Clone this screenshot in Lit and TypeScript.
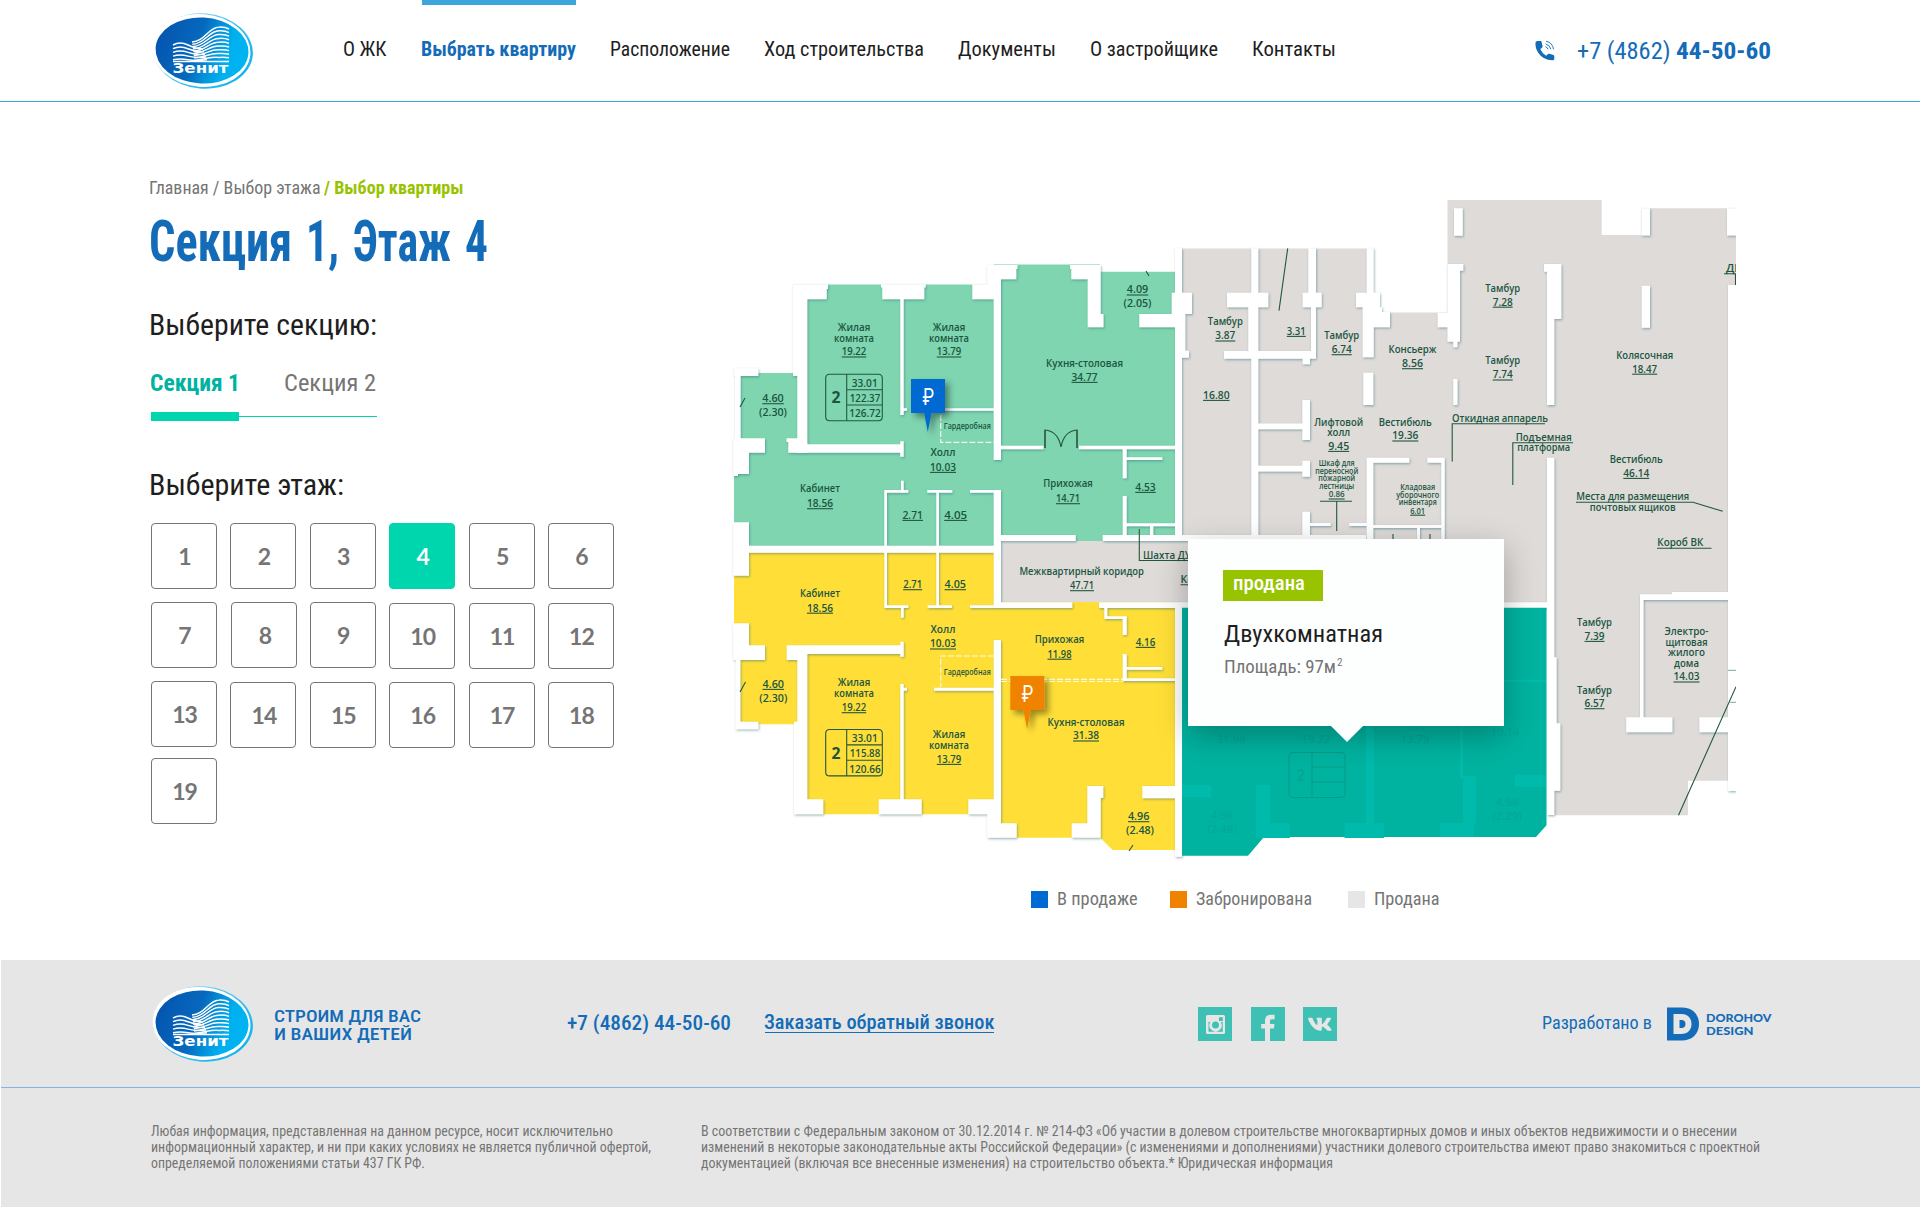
import { LitElement, html, svg, css } from "lit";
import { customElement, property, state } from "lit/decorators.js";
import { classMap } from "lit/directives/class-map.js";

/** One line of condensed text, set to an exact measure. */
const line = (text: string, width: number, size: number, cls = "") => html`
  <svg class="line" width=${width} height=${size + 6} role="text">
    <text class=${cls} x=${size > 14 ? -1 : 0} y=${size} font-size=${size} textLength=${size > 14 ? width + 1 : width} lengthAdjust="spacingAndGlyphs">${text}</text>
  </svg>`;

const lineStyles = css`
  .line { display: block; overflow: visible; flex: none; fill: currentColor;
    font-family: "Roboto Condensed", Roboto, "Liberation Sans", sans-serif; white-space: pre; }
  .medium { font-weight: 500; }
  .bold { font-weight: 700; }
`;

@customElement("zenit-logo")
class ZenitLogo extends LitElement {
  static styles = css`
    :host { display: block; width: 102px; height: 78px; }
    svg { display: block; }
    .name { font: 700 13.5px "DejaVu Sans", Roboto, sans-serif; fill: #fff; }
    .wave { fill: none; stroke: #fff; stroke-width: 1.5; }
  `;
  render() {
    const floors = Array.from({ length: 9 }, (_, i) => i);
    return html`
      <svg width="102" height="78" viewBox="0 0 102 78">
        <defs>
          <linearGradient id="g" x1="0" y1=".3" x2="1" y2=".5">
            <stop offset="0" stop-color="#0554ae" />
            <stop offset=".45" stop-color="#0669bd" />
            <stop offset=".62" stop-color="#048fd8" />
            <stop offset=".8" stop-color="#00b0ef" />
            <stop offset="1" stop-color="#00b4f2" />
          </linearGradient>
          <linearGradient id="r" x1="0" y1="0" x2="1" y2=".6">
            <stop offset="0" stop-color="#c9ecfb" />
            <stop offset=".5" stop-color="#4fc3f0" />
            <stop offset="1" stop-color="#18b4ee" />
          </linearGradient>
        </defs>
        <ellipse cx="51" cy="39" rx="50" ry="37.6" transform="rotate(5 51 39)" fill="url(#r)" />
        <ellipse cx="49.5" cy="38.6" rx="49" ry="36.4" transform="rotate(5 51 39)" fill="#fff" />
        <ellipse cx="50" cy="38.6" rx="46.5" ry="33" transform="rotate(3 51 39)" fill="url(#g)" />
        ${floors.map((i) => svg`<path class="wave" d=${`M${40 + i * 0.3} ${30 + i * 2.3} C${52 + i * 0.6} ${30 + i * 2.1} ${57} ${15 + i * 3.7} ${67} ${15 + i * 3.8} Q73 ${14.6 + i * 3.8} 77 ${17 + i * 3.6}`} />`)}
        ${[0, 1, 2, 3, 4].map((i) => svg`<path class="wave" d=${`M21 ${33 + i * 3.7} Q28 ${29 + i * 4.3} 36 ${33 + i * 3.7} T${51 + i} ${37 + i * 2.7}`} />`)}
        <path class="wave" d="M21 49.5H77" />
        <text class="name" x="20.5" y="61" textLength="56" lengthAdjust="spacingAndGlyphs">Зенит</text>
      </svg>`;
  }
}

@customElement("site-header")
class SiteHeader extends LitElement {
  static styles = [lineStyles, css`
    :host { display: flex; box-sizing: border-box; height: 102px; padding: 0 0 0 152px;
      border-bottom: 1px solid #3ba5dc; color: #1e1e1e; background: #fff; }
    zenit-logo { margin-top: 12px; }
    nav { display: flex; gap: 35px; margin-left: 90px; }
    .link { padding-top: 30px; border-top: 5px solid transparent; }
    .active { color: #146cb8; border-top-color: #3ba5dc; }
    .phone { display: flex; margin: 35px 0 0 198px; color: #146cb8; }
    .phone .icon { display: block; margin: 5px 22px 0 0; }
    .num { margin-left: 7px; }
  `];
  links: [string, number][] = [["О ЖК", 42.5], ["Выбрать квартиру", 154], ["Расположение", 119],
    ["Ход строительства", 159], ["Документы", 97], ["О застройщике", 127], ["Контакты", 83]];
  render() {
    return html`
      <zenit-logo></zenit-logo>
      <nav>
        ${this.links.map(([t, w], i) => html`<div class=${classMap({ link: true, active: i === 1 })}>${line(t, w, 21, i === 1 ? "bold" : "")}</div>`)}
      </nav>
      <div class="phone">
        <svg class="icon" width="22" height="22" viewBox="0 0 22 22" fill="#146cb8">
          <path d="M1.500 2.600Q1.700 1.100 3.600 1L6.600.9Q7.400 1 7.600 2L8.600 6.300Q8.700 7.200 8 7.700L6.300 9Q8 13.600 12.200 15.700L14 14.100Q14.700 13.600 15.500 13.800L19.400 14.900Q20.300 15.200 20.300 16.200V19Q20.200 20.300 18.700 20.300Q9.500 20.600 4.200 12.800Q1 8 1.500 2.600Z" />
          <path d="M12 1.200Q18.400 2.400 19.600 9.400M11.700 4Q16 5 16.800 9.200M11.500 6.700Q13.600 7.300 14 9.300" fill="none" stroke="#146cb8" stroke-width=".9" />
        </svg>
        ${line("+7 (4862)", 92.5, 24)}
        <div class="num">${line("44-50-60", 94, 24, "bold")}</div>
      </div>`;
  }
}

@customElement("floor-picker")
class FloorPicker extends LitElement {
  @property({ type: Number }) floor = 4;
  static styles = [lineStyles, css`
    :host { display: block; flex: none; box-sizing: border-box; width: 724px; padding: 74px 0 0 149.5px; color: #1e1e1e; }
    .crumbs { display: flex; gap: 4.5px; color: #757575; }
    .here { color: #98c300; }
    .title { display: flex; gap: 15px; margin-top: 3px; color: #146cb8; }
    .head { margin-top: 37.5px; }
    .tabs { display: flex; gap: 45px; margin-top: 26px; padding-left: 1px; color: #757575; }
    .on { color: #00b3a0; }
    .track { display: flex; align-items: center; width: 226px; height: 9px; margin: 15.5px 0 0 1.5px; }
    .fill { width: 88px; height: 9px; background: #00d6ae; }
    .rest { flex: 1; height: 1px; background: #00d6ae; }
    .second { margin-top: 44px; }
    .grid { display: grid; grid-template-columns: repeat(6, 79.4px); grid-template-rows: 79px 78.5px 77.5px 66px;
      margin: 22px 0 0 1.5px; }
    .cell { box-sizing: border-box; width: 66px; height: 66px; border: 1px solid #757575; border-radius: 4px;
      display: flex; align-items: center; justify-content: center; color: #757575;
      font: 700 23px/1 Lato, "Open Sans", sans-serif; letter-spacing: -1px; padding: 1px 0 0 1px; background: #fff; }
    .low { margin-top: 1px; }
    .right { margin-left: 1px; }
    .picked { background: #00d6ae; border-color: #00d6ae; color: #fff; }
  `];
  render() {
    const floors = Array.from({ length: 19 }, (_, i) => i + 1);
    return html`
      <div class="crumbs">${line("Главная / Выбор этажа", 170.5, 18)}<div class="here">${line("/ Выбор квартиры", 138.5, 18, "bold")}</div></div>
      <div class="title">
        ${line("Секция", 142, 58, "bold")}${line("1,", 32, 58, "bold")}${line("Этаж", 97, 58, "bold")}${line("4", 22, 58, "bold")}
      </div>
      <div class="head">${line("Выберите секцию:", 227, 30)}</div>
      <div class="tabs"><div class="on">${line("Секция 1", 89, 24, "bold")}</div>${line("Секция 2", 91, 24)}</div>
      <div class="track"><div class="fill"></div><div class="rest"></div></div>
      <div class="head second">${line("Выберите этаж:", 194, 30)}</div>
      <div class="grid">
        ${floors.map((n) => html`<div class=${classMap({
          cell: true, picked: n === this.floor,
          low: (n > 9 && n < 13) || (n > 13 && n < 19), right: n === 8,
        })}>${n}</div>`)}
      </div>`;
  }
}

type Label = [text: string, cx: number, base: number, width: number, kind?: string];

const LABELS: Label[] = [
  ["Жилая", 854, 331, 32.5], ["комната", 854, 341.7, 40], ["19.22", 854, 355.3, 24.5, "u"],
  ["Жилая", 949, 331, 32.5], ["комната", 949, 341.7, 40], ["13.79", 949, 355.3, 24.5, "u"],
  ["33.01", 864.7, 387, 26], ["122.37", 865, 401.7, 30.5], ["126.72", 865, 417.3, 31.5], ["2", 836, 403.3, 9, "n"],
  ["4.60", 773, 402, 21.5, "u"], ["(2.30)", 773, 416, 28], ["Гардеробная", 967.3, 428.7, 47, "s"],
  ["Холл", 943, 456.3, 25], ["10.03", 943, 470.7, 26, "u"], ["Кабинет", 820, 492.3, 40], ["18.56", 820, 507, 26, "u"],
  ["2.71", 912.7, 518.7, 20.5, "u"], ["4.05", 955.7, 518.7, 23, "u"],
  ["4.09", 1137.5, 293.3, 21.5, "u"], ["(2.05)", 1137.5, 307.3, 28], ["Кухня-столовая", 1084.5, 366.7, 77],
  ["34.77", 1084.5, 380.7, 26, "u"], ["Прихожая", 1068, 487.3, 49.5], ["14.71", 1068, 502, 24, "u"], ["4.53", 1145.5, 490.7, 20.5, "u"],
  ["Тамбур", 1225.3, 325.3, 35], ["3.87", 1225.3, 339.3, 20, "u"], ["16.80", 1216.3, 398.7, 26.5, "u"],
  ["2.71", 912.7, 588, 19, "u"], ["4.05", 955.3, 588, 21.5, "u"], ["Кабинет", 820, 597, 40], ["18.56", 820, 611.5, 26, "u"],
  ["Холл", 943, 633.3, 25], ["10.03", 943, 647.3, 26, "u"], ["Гардеробная", 967.3, 675.3, 47, "s"],
  ["4.60", 773.3, 687.7, 21.5, "u"], ["(2.30)", 773.3, 701.7, 28],
  ["Жилая", 854, 686.3, 32.5], ["комната", 854, 697, 40], ["19.22", 854, 711, 24.5, "u"],
  ["33.01", 864.7, 742.3, 26], ["115.88", 865, 757, 30.5], ["120.66", 865, 772.5, 31.5], ["2", 836, 758.5, 9, "n"],
  ["Жилая", 949, 738, 32.5], ["комната", 949, 748.7, 40], ["13.79", 949, 762.7, 24.5, "u"],
  ["Межквартирный коридор", 1081.7, 574.7, 124.5], ["47.71", 1082, 589, 24, "u"],
  ["Прихожая", 1059.5, 643, 49.5], ["11.98", 1059.5, 657.5, 24, "u"], ["4.16", 1145.5, 645.7, 19.5, "u"],
  ["Кухня-столовая", 1086, 725.7, 77], ["31.38", 1086, 739.3, 26, "u"], ["4.96", 1138.7, 820, 21.5, "u"], ["(2.48)", 1140, 834, 28],
  ["Шахта ДУ", 1167, 559, 48], ["Короб", 1197, 583, 33, "u"],
  ["3.31", 1296.3, 334.7, 19, "u"], ["Тамбур", 1341.7, 339, 35], ["6.74", 1341.7, 353, 20, "u"],
  ["Консьерж", 1412.5, 353.3, 48], ["8.56", 1412.5, 367, 21, "u"], ["Лифтовой", 1338.7, 425.7, 49], ["холл", 1338.7, 436.3, 23],
  ["9.45", 1338.7, 449.7, 21, "u"], ["Вестибюль", 1405.3, 425.7, 53], ["19.36", 1405.3, 439.3, 26, "u"],
  ["Шкаф для", 1336.7, 465.7, 36, "s"], ["переносной", 1336.7, 473.7, 43, "s"], ["пожарной", 1336.7, 481.3, 37, "s"],
  ["лестницы", 1336.7, 489, 35, "s"], ["0.86", 1336.7, 497.3, 16, "su"],
  ["Кладовая", 1417.7, 489.7, 35, "s"], ["уборочного", 1417.7, 497.5, 43, "s"], ["инвентаря", 1417.7, 505.3, 38, "s"], ["6.01", 1417.7, 513.5, 15, "su"],
  ["Тамбур", 1502.7, 291.7, 35], ["7.28", 1502.7, 305.5, 20, "u"], ["Тамбур", 1502.7, 364.3, 35], ["7.74", 1502.7, 378.3, 20, "u"],
  ["Откидная аппарель", 1500, 421.7, 96], ["Подъемная", 1543.7, 440.7, 56], ["платформа", 1543.7, 451.3, 53],
  ["Колясочная", 1644.7, 358.7, 57], ["18.47", 1644.7, 372.5, 25, "u"], ["Вестибюль", 1636.3, 463, 53], ["46.14", 1636.3, 476.7, 26, "u"],
  ["Места для размещения", 1632.7, 500.3, 113], ["почтовых ящиков", 1632.7, 511, 86], ["Короб ВК", 1680.3, 546.3, 46],
  ["Тамбур", 1594.5, 626, 35], ["7.39", 1594.5, 639.7, 20, "u"], ["Тамбур", 1594.5, 693.5, 35], ["6.57", 1594.5, 707, 20, "u"],
  ["Электро-", 1686.5, 635, 44], ["щитовая", 1686.5, 645.7, 42], ["жилого", 1686.5, 656, 37], ["дома", 1686.5, 666.7, 25], ["14.03", 1686.5, 680.3, 26, "u"],
  ["ДГУ", 1737, 272.3, 22],
];

const GREEN = "M793 284.500H994V264.500H1100V271.700H1175V538H1001V546H734V453H740.500V373H797V300H793Z";
const YELLOW = "M734 552H1001V602H1175V850H1112.700L1100.700 838.300V837.700H1001V814.300H797V724.300H740.300V645H734Z";
const GREY = "M1182 248.500H1374V312.500H1447.500V200H1601.700V235H1641.700V208.300H1736V285H1728V780.700H1688V815.300H1554V608H1001V538H1126V526H1151V536H1182Z";
const TEAL = "M1182 607.700H1546.500V825.300L1536 837H1264L1248 855.700H1182Z";

/* Wall segments: x1, y1, x2, y2. */
const WALLS: number[][] = [
  [793,284.3,807.3,376],[797.3,370,807.3,453],[793,284.3,826.7,299.3],[882.3,284.3,924.3,299.3],[972.3,284.3,994,299.3],
  [824,284.3,828,289],[881,284.3,885,287.5],[922,284.3,925.7,287.5],[987.3,265,1016.3,279.3],[987.3,279,1001,299.3],[993.7,279,1001,460],
  [1014,265,1017.5,269],[1070,265,1074,269],[900.3,299,903.7,415],[900.3,441.3,903.7,456.7],[903,408.3,907,410.7],[935,408.3,994,410.7],
  [788.3,444.3,900.5,452.7],[788.3,441,807.3,452.7],[786.5,438.3,800,442],[733.3,438.3,765,452.7],[733.3,452,749,474],[733.3,472,738,476],
  [733.3,522.3,749,575.7],[734.3,368.3,758.3,376],[735,376,740.5,440],
  [884.3,490,908.3,492.7],[884.3,490,887,546],[901,480.7,903.7,490.5],[927.3,490,952.3,492.7],[936.3,492,939,546],[970,490,1001,492.7],[993.7,490,1001,606.7],
  [733.3,545.7,1001,552.7],
  [1071.3,265,1100.7,279.3],[1087.7,279,1100.7,327.3],[1100,314,1103.5,327.3],[1139.3,314,1175,327.3],[1171.7,292.7,1192,314],
  [1175,248.3,1182,541],[1001,445.7,1043.5,449.3],[1079,445.7,1175,449.3],[1122.7,449,1126.7,478.3],[1126,457.3,1162.3,460],
  [1122.7,496,1126.7,536],[1126,523.3,1175,526.3],[1150,526,1153.3,536],[1001,535,1075.7,541],[1102.7,535,1366,541],
  [884.3,605.3,908.3,608],[884.3,552,887,608],[901,608,903.7,617.7],[927.7,605.3,952,608],[936.3,552,939,606],[970,605.3,1001,608],
  [788.3,645.3,900.5,654],[900.3,641.7,903.7,656.7],[786.7,645.3,807.3,660],[797.3,658,807.3,722],[794,721.7,807.3,814.3],
  [733.3,623.3,749,660],[733.3,645.3,765,660],[735.7,721.7,758.3,729.3],[735.7,660,740.3,723],
  [900.3,684,903.7,799.5],[903,687.7,907,690.7],[934,687.7,994,690.7],[993.7,640,1001,824],
  [794,799.3,823.3,814.3],[878.7,799.3,921.7,814.3],[968.3,799.3,1001,814.3],[987.3,814,1001,837.7],[987.3,823.3,1016.7,837.7],
  [1071.7,823.3,1100.7,837.7],[1087.3,786,1100.7,837.7],[1087.3,786,1103.3,798],[1142.3,786,1176,798.3],
  [1001,602.3,1072.3,608],[1099,602.3,1547,608],[1175,608,1182,856.7],[1104.3,608,1107.3,619],[1104.3,616.3,1126.7,619],[1122.7,616.3,1126.7,635],
  [1122.7,654,1126.7,681],[1126,667,1162.3,669.7],[1122.7,678.3,1175,681],
  [1181,307,1185.3,357],[1181,350.7,1189,357.7],[1227,292.7,1268.3,307.3],[1251.3,248.3,1258.3,541],[1248.3,307,1258.3,353],[1224,351,1316,358.7],
  [1258,423.5,1303,429.2],[1258,465.8,1303,471.5],[1308.3,248.3,1316,293],[1302.7,292.7,1321.7,307.3],[1311,307,1316,358],[1302.7,352,1310,364.3],
  [1302.3,400,1310,440],[1302.3,460.7,1310,476.7],[1302.3,511.7,1310,541],[1310,523,1330.7,526],[1349.3,523,1367,526],
  [1366.7,248.3,1373.7,293],[1356,292.7,1380,307.3],[1362.7,307,1373.7,357.3],[1373,307,1382,327.3],[1373,312,1390,327.3],[1363.3,372.7,1373.3,405],
  [1366.7,457.7,1373.3,541],[1373,457.7,1409.3,462.7],[1427.3,457.7,1444.5,462.7],[1441.3,457.7,1444.7,541],[1373,525,1444.5,528],[1417,528,1420,541],
  [1437.7,312.7,1460,327.3],[1447.5,264,1460,341.7],[1447.5,264,1463.3,270.7],[1453.3,341,1457.5,347.3],[1453.3,379,1457.5,405],[1454,208.3,1462.7,235.7],
  [1544,264,1561.3,271.7],[1547,271,1561.3,319],[1547,319,1554.3,405],[1547,457.7,1554.3,815],[1554,657.3,1556.6,724],[1554,723.3,1560.3,790.7],
  [1641.7,208.3,1650,235.5],[1641.7,285.7,1650,327.7],[1727,208.3,1736,235.5],[1728,285,1736,791],[1640,594.3,1728,600],[1672,592,1728,600],
  [1640,594.3,1643.5,718],[1626.2,717.3,1672.4,732.3],[1699.4,717.3,1728,732.3],
];

/* Structure that shows through the highlighted flat. */
const GHOSTS: number[][] = [
  [1182,785,1211,797],[1256,785,1270,838],[1270,823,1290,838],[1344.6,823,1384,838],[1366,725,1374,823],
  [1460,725,1463,778],[1440,823,1474,837],[1463,776,1476,823],[1515,775,1546,787],[1504,680,1546,682],
];

@customElement("floor-plan")
class FloorPlan extends LitElement {
  static styles = [lineStyles, css`
    :host { display: block; position: relative; width: 1024px; height: 858px; }
    .plan { display: block; margin-top: 88px; }
    .lbl { font: 600 11.3px "Open Sans", "Noto Sans", sans-serif; fill: #1c5641; text-anchor: middle; }
    .s { font-size: 8.4px; }
    .n { font-size: 15.5px; font-weight: 700; }
    .ink { stroke: #23573f; stroke-width: 1.1; fill: none; }
    .dash { stroke: #f3fbe6; stroke-width: 1.2; fill: none; stroke-dasharray: 6 2; }
    .ghost { fill: #079c8e; stroke: none; opacity: .5; }
    .rub { font: 24px Roboto, "DejaVu Sans", sans-serif; fill: #fff; }
    .tip { position: absolute; left: 464px; top: 437px; box-sizing: border-box; width: 316px; height: 187px; padding: 31px 0 0 35px;
      background: #fdfffe; box-shadow: 0 10px 30px rgba(0,0,0,.28); color: #1e1e1e; }
    .tip::after { content: ""; position: absolute; left: 142px; top: 186px; border: 17px solid transparent; border-top-color: #fdfffe; border-bottom: 0; }
    .badge { box-sizing: border-box; width: 100px; height: 31px; padding: 0 0 0 11px; background: #98c300; color: #fff; }
    .kind { margin: 17px 0 0 2px; }
    .area { display: flex; gap: 1px; margin: 7px 0 0 1.5px; color: #757575; }
    .legend { display: flex; margin: 17px 0 0 307px; color: #757575; }
    .key { display: flex; gap: 10px; }
    .sq { width: 17px; height: 17px; margin-top: 4px; }
    .sale { background: #016ad2; } .held { background: #ef8300; } .sold { background: #e6e6e6; }
    .k2 { margin-left: 32.5px; } .k3 { margin-left: 35.5px; }
  `];

  private label([t, cx, y, w, k = ""]: Label) {
    const small = k.includes("s");
    return svg`<text class=${"lbl " + (small ? "s" : k === "n" ? "n" : "")} x=${cx} y=${y} textLength=${w} lengthAdjust="spacingAndGlyphs">${t}</text>
      ${k.includes("u") ? svg`<path class="ink" d=${`M${cx - w / 2} ${y + 1.7}h${w}`} />` : null}`;
  }

  private areaBox(y: number) {
    return svg`<path class="ink" d=${`M829.7 ${y}h48.6q4 0 4 4v38.4q0 4 -4 4h-48.6q-4 0 -4 -4v-38.4q0 -4 4 -4zM846.7 ${y}v46.4M846.7 ${y + 15.4}h35.6M846.7 ${y + 30.7}h35.6`} />`;
  }

  private pin(x: number, y: number, color: string) {
    return svg`<g filter="url(#pinShade)"><path fill=${color} d=${`M${x} ${y}h34v34h-13.5l-3.7 19 -3.7 -19h-13.1z`} /></g>
      <text class="rub" x=${x + 11.5} y=${y + 25.5} textLength="11.5" lengthAdjust="spacingAndGlyphs">₽</text>`;
  }

  render() {
    return html`
      <svg class="plan" width="1024" height="680" viewBox="724 190 1024 680">
        <defs>
          <filter id="wallShade" x="-5%" y="-5%" width="110%" height="110%">
            <feDropShadow dx=".8" dy="1.2" stdDeviation="1.1" flood-color="#2b6a78" flood-opacity=".5" />
          </filter>
          <filter id="pinShade" x="-60%" y="-40%" width="250%" height="220%">
            <feDropShadow dx="4" dy="4" stdDeviation="3" flood-color="#000" flood-opacity=".4" />
          </filter>
          <clipPath id="sheet"><rect x="724" y="190" width="1012" height="680" /></clipPath>
        </defs>
        <g clip-path="url(#sheet)">
          <path d=${GREY} fill="#dedbd9" />
          <path d=${GREEN} fill="#7ed5b0" />
          <path d=${YELLOW} fill="#ffdf37" />
          <path d="M1075 541h28v-6h-28z" fill="#7ed5b0" />
          <path d="M1072 608h28v-6h-28z" fill="#ffdf37" />
          <g filter="url(#wallShade)"><path fill="#fff" d=${WALLS.map(([a, b, c, d]) => `M${a} ${b}H${c}V${d}H${a}Z`).join("")} /></g>
          <path d=${TEAL} fill="#00b3a0" />
          <path d=${GHOSTS.map(([a, b, c, d]) => `M${a} ${b}H${c}V${d}H${a}Z`).join("")} fill="#00bbab" />
          <path class="dash" d="M940.700 415V442.300H994M994 656H940.700V687M1001 679.300H1123M1001 681.500H1123" />
          ${this.areaBox(374.3)}${this.areaBox(729.5)}
          <path class="ink" d="M740 407l5-9M740 692l5.500-10M1146 271l3 5M1129 851l4-6" />
          <path class="ink" d="M1045 448V430q13 1 16 17q3-16 16-17V448" />
          <path class="ink" stroke-width="2" d="M1045 430V448M1077 430V448" />
          <path class="ink" d="M1139.300 529V560.500H1200M1287.700 248.300L1279 310.700M1320 501.200H1352M1336.700 501V531M1393 534v6M1430 534v6
            M1545 423.700H1452.200V461.500M1573 442.700H1512.800V485M1576 502.300H1693L1722.700 511.300M1657 548.300H1711.500M1724 273.700H1735.500V285M1736 686.700L1678.500 815.300" />
          <path d="M1728 670.300h8M1728 702.300h8" stroke="#7fa3a8" />
          ${LABELS.map((l) => this.label(l))}
          <g opacity=".25"><rect class="ink" x="1289" y="752.500" width="56" height="45" rx="4" /><path class="ink" d="M1312 752v45M1312 767h33M1312 782h33" /></g>
          <text class="lbl n ghost" x="1300.500" y="781">2</text>
          <text class="lbl ghost" x="1222" y="819">4.96</text><text class="lbl ghost" x="1222" y="833">(2.48)</text>
          <text class="lbl ghost" x="1507" y="806">4.58</text><text class="lbl ghost" x="1507" y="820">(2.29)</text>
          <text class="lbl ghost" x="1231" y="743">31.98</text><text class="lbl ghost" x="1316" y="743">19.22</text>
          <text class="lbl ghost" x="1415" y="743">13.79</text><text class="lbl ghost" x="1505" y="736">10.14</text>
        </g>
        ${this.pin(911, 379, "#016ad2")}${this.pin(1010.3, 676, "#ef8300")}
      </svg>
      <div class="tip">
        <div class="badge">${line("продана", 71, 20, "medium")}</div>
        <div class="kind">${line("Двухкомнатная", 158, 24)}</div>
        <div class="area">${line("Площадь: 97м", 111, 18)}${line("2", 5.5, 11)}</div>
      </div>
      <div class="legend">
        <div class="key"><div class="sq sale"></div>${line("В продаже", 79.5, 18)}</div>
        <div class="key k2"><div class="sq held"></div>${line("Забронирована", 115, 18)}</div>
        <div class="key k3"><div class="sq sold"></div>${line("Продана", 64.5, 18)}</div>
      </div>`;
  }
}

@customElement("site-footer")
class SiteFooter extends LitElement {
  static styles = [lineStyles, css`
    :host { display: block; height: 247px; background: #e6e6e6; border-left: 1px solid #fff; color: #146cb8; box-sizing: border-box; }
    .top { display: flex; height: 127px; border-bottom: 1px solid #86b3e4; padding-left: 151px; }
    zenit-logo { margin-top: 25px; }
    .slogan { width: 293px; margin: 46px 0 0 20.5px; }
    .slogan .row { height: 18px; }
    .tel { margin: 50px 34px 0 0; }
    .call { height: 23px; margin-top: 49px; border-bottom: 1px solid #146cb8; }
    .social { display: flex; gap: 18.5px; margin: 47px 0 0 204px; }
    .social svg { display: block; }
    .by { display: flex; margin: 47px 0 0 206px; }
    .made { margin: 4px 15px 0 0; }
    .mark { display: block; margin-right: 7px; }
    .brand { padding-top: 3px; }
    .brand .row { height: 12.5px; }
    .brand .line { font-family: Lato, "Open Sans", sans-serif; }
    .brand text { font-weight: 900; }
    .legal { display: flex; gap: 50px; padding: 34px 0 0 150px; color: #757575; }
    .col { display: grid; grid-auto-rows: 16px; }
  `];
  render() {
    return html`
      <div class="top">
        <zenit-logo></zenit-logo>
        <div class="slogan">
          <div class="row">${line("СТРОИМ ДЛЯ ВАС", 146, 16, "medium")}</div>
          <div class="row">${line("И ВАШИХ ДЕТЕЙ", 137, 16, "medium")}</div>
        </div>
        <div class="tel">${line("+7 (4862) 44-50-60", 163, 20, "medium")}</div>
        <div class="call">${line("Заказать обратный звонок", 229.5, 20, "medium")}</div>
        <div class="social">
          <svg width="34" height="34" viewBox="0 0 34 34"><path fill="#3fc0b5" d="M0 0h34v34H0z" />
            <rect x="8" y="8" width="19" height="19" rx="1.500" fill="#e6e6e6" />
            <path fill="#3fc0b5" d="M21 10.200h3.800v3.800H21zM10.500 15h1.800a6.200 6.200 0 1 0 10.500 0h1.900v9.700H10.500z" />
            <circle cx="17.500" cy="18" r="5.600" fill="#e6e6e6" /><circle cx="17.500" cy="18" r="3.500" fill="#3fc0b5" /></svg>
          <svg width="34" height="34" viewBox="0 0 34 34"><path fill="#3fc0b5" d="M0 0h34v34H0z" />
            <path fill="#e6e6e6" d="M14 34V21.500H10.200V17H14V13.800C14 10 16.200 7.800 19.800 7.800h3.800V12.300h-2.600c-1.600 0-2 .8-2 2V17h4.500l-.6 4.500H19V34z" /></svg>
          <svg width="34" height="34" viewBox="0 0 34 34"><path fill="#3fc0b5" d="M0 0h34v34H0z" />
            <path fill="#e6e6e6" transform="translate(4.300 6.800) scale(.0435 .0405)" d="M545 117.700c3.700-12.500 0-21.700-17.800-21.700h-58.900c-15 0-21.900 7.900-25.600 16.700 0 0-30 73.100-72.400 120.500-13.700 13.700-20 18.100-27.500 18.100-3.700 0-9.400-4.400-9.400-16.900V117.700c0-15-4.200-21.700-16.600-21.700h-92.600c-9.400 0-15 7-15 13.500 0 14.200 21.200 17.500 23.400 57.500v86.800c0 19-3.400 22.500-10.900 22.500-20 0-68.600-73.400-97.400-157.400-5.800-16.300-11.500-22.900-26.600-22.900H38.800c-16.800 0-20.200 7.900-20.200 16.700 0 15.600 20 93.100 93.100 195.500C160.400 378.100 229 416 291.400 416c37.500 0 42.100-8.400 42.100-22.900 0-66.800-3.400-73.100 15.400-73.100 8.700 0 23.700 4.400 58.700 38.100 40 40 46.600 57.900 69 57.900h58.900c16.800 0 25.300-8.400 20.400-25-11.200-34.900-86.900-106.700-90.300-111.500-8.700-11.200-6.200-16.200 0-26.200.1-.1 72-101.300 79.400-135.600z" /></svg>
        </div>
        <div class="by">
          <div class="made">${line("Разработано в", 109, 18)}</div>
          <svg class="mark" width="32" height="34" viewBox="0 0 32 34"><path fill="#146cb8" fill-rule="evenodd"
            d="M0 .500H15C25 .500 32 7 32 17S25 33.500 15 33.500H0ZM6.500 7V27H14.500C20.500 27 24.500 23 24.500 17S20.500 7 14.500 7ZM12.500 13H14.500C17 13 18.500 14.500 18.500 17S17 21 14.500 21H12.500Z" /></svg>
          <div class="brand">
            <div class="row">${line("DOROHOV", 65.5, 12)}</div>
            <div class="row">${line("DESIGN", 47.5, 12)}</div>
          </div>
        </div>
      </div>
      <div class="legal">
        <div class="col">
          ${line("Любая информация, представленная на данном ресурсе, носит исключительно", 462, 14)}
          ${line("информационный характер, и ни при каких условиях не является публичной офертой,", 500, 14)}
          ${line("определяемой положениями статьи 437 ГК РФ.", 274, 14)}
        </div>
        <div class="col">
          ${line("В соответствии с Федеральным законом от 30.12.2014 г. № 214-ФЗ «Об участии в долевом строительстве многоквартирных домов и иных объектов недвижимости и о внесении", 1036, 14)}
          ${line("изменений в некоторые законодательные акты Российской Федерации» (с изменениями и дополнениями) участники долевого строительства имеют право знакомиться с проектной", 1059, 14)}
          ${line("документацией (включая все внесенные изменения) на строительство объекта.* Юридическая информация", 632, 14)}
        </div>
      </div>`;
  }
}

@customElement("app-root")
class AppRoot extends LitElement {
  @state() floor = 4;
  static styles = css`
    :host { display: block; width: 1920px; height: 1207px; background: #fff; overflow: hidden; }
    main { display: flex; height: 858px; }
  `;
  render() {
    return html`
      <site-header></site-header>
      <main>
        <floor-picker .floor=${this.floor}></floor-picker>
        <floor-plan></floor-plan>
      </main>
      <site-footer></site-footer>`;
  }
}
